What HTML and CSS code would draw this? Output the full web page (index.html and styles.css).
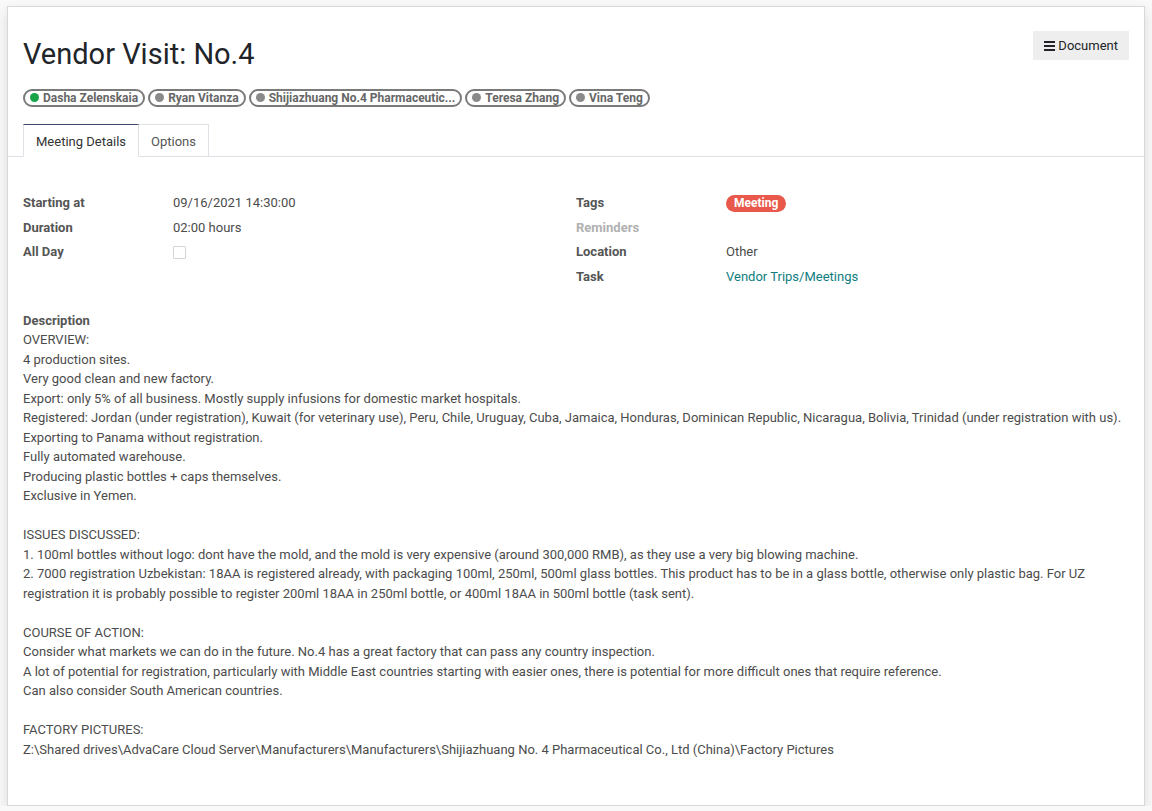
FILE: index.html
```html
<!DOCTYPE html>
<html lang="en">
<head>
    <meta charset="UTF-8">
    <title>Vendor Visit: No.4</title>
    <link rel="stylesheet" href="styles.css">
</head>
<body>
    <div class="sheet">
        <div class="sheet-head">
            <div class="title-row">
                <h1 class="title">Vendor Visit: No.4</h1>
                <button class="doc-btn">
                    <svg class="bars" width="11" height="10" viewBox="0 0 11 10"><rect x="0" y="0" width="11" height="2"/><rect x="0" y="4" width="11" height="2"/><rect x="0" y="8" width="11" height="2"/></svg>
                    Document
                </button>
            </div>

            <div class="attendees">
                <span class="att"><i class="dot green"></i>Dasha Zelenskaia</span>
                <span class="att"><i class="dot"></i>Ryan Vitanza</span>
                <span class="att"><i class="dot"></i>Shijiazhuang No.4 Pharmaceutic...</span>
                <span class="att"><i class="dot"></i>Teresa Zhang</span>
                <span class="att"><i class="dot"></i>Vina Teng</span>
            </div>
        </div>

        <div class="tabs">
            <div class="tab active">Meeting Details</div>
            <div class="tab">Options</div>
        </div>

        <div class="tab-body">
            <div class="groups">
                <div class="group">
                    <div class="row"><div class="lbl">Starting at</div><div class="val">09/16/2021 14:30:00</div></div>
                    <div class="row"><div class="lbl">Duration</div><div class="val">02:00 hours</div></div>
                    <div class="row"><div class="lbl">All Day</div><div class="val"><span class="check"></span></div></div>
                </div>
                <div class="group">
                    <div class="row"><div class="lbl">Tags</div><div class="val"><span class="badge">Meeting</span></div></div>
                    <div class="row"><div class="lbl muted">Reminders</div><div class="val"></div></div>
                    <div class="row"><div class="lbl">Location</div><div class="val">Other</div></div>
                    <div class="row"><div class="lbl">Task</div><div class="val"><a class="link" href="#">Vendor Trips/Meetings</a></div></div>
                </div>
            </div>

            <div class="desc">
                <div class="lbl">Description</div>
                <p>OVERVIEW:<br>
                4 production sites.<br>
                Very good clean and new factory.<br>
                Export: only 5% of all business. Mostly supply infusions for domestic market hospitals.<br>
                Registered: Jordan (under registration), Kuwait (for veterinary use), Peru, Chile, Uruguay, Cuba, Jamaica, Honduras, Dominican Republic, Nicaragua, Bolivia, Trinidad (under registration with us).<br>
                Exporting to Panama without registration.<br>
                Fully automated warehouse.<br>
                Producing plastic bottles + caps themselves.<br>
                Exclusive in Yemen.</p>
                <p>ISSUES DISCUSSED:<br>
                1. 100ml bottles without logo: dont have the mold, and the mold is very expensive (around 300,000 RMB), as they use a very big blowing machine.<br>
                2. 7000 registration Uzbekistan: 18AA is registered already, with packaging 100ml, 250ml, 500ml glass bottles. This product has to be in a glass bottle, otherwise only plastic bag. For UZ registration it is probably possible to register 200ml 18AA in 250ml bottle, or 400ml 18AA in 500ml bottle (task sent).</p>
                <p>COURSE OF ACTION:<br>
                Consider what markets we can do in the future. No.4 has a great factory that can pass any country inspection.<br>
                A lot of potential for registration, particularly with Middle East countries starting with easier ones, there is potential for more difficult ones that require reference.<br>
                Can also consider South American countries.</p>
                <p>FACTORY PICTURES:<br>
                Z:\Shared drives\AdvaCare Cloud Server\Manufacturers\Manufacturers\Shijiazhuang No. 4 Pharmaceutical Co., Ltd (China)\Factory Pictures</p>
            </div>
        </div>
    </div>
</body>
</html>
```

FILE: styles.css
```css
* {
    margin: 0;
    padding: 0;
    box-sizing: border-box;
}

body {
    font-family: Roboto, 'Noto Sans', sans-serif;
    font-size: 13px;
    line-height: 1.5;
    color: #4c4c4c;
    background: #f9f9f9;
}

.sheet {
    margin: 6px 7px 0 7px;
    height: 800px;
    background: #fff;
    border: 1px solid #d8d8d8;
    box-shadow: 0 5px 12px rgba(0, 0, 0, 0.12);
}

.sheet-head {
    padding: 16px 15px 0 15px;
}

.title-row {
    display: flex;
    justify-content: space-between;
    align-items: flex-start;
}

.title {
    font-size: 29px;
    font-weight: 400;
    line-height: 1.2;
    color: #212529;
    margin-top: 14px;
}

.doc-btn {
    display: flex;
    align-items: center;
    gap: 3px;
    margin-top: 8px;
    height: 29px;
    padding: 0 11px;
    background: #eeeeee;
    border: none;
    border-radius: 0;
    font-family: inherit;
    font-size: 13px;
    color: #212529;
}

.bars {
    fill: #212529;
}

.attendees {
    display: flex;
    gap: 3px;
    margin-top: 17px;
}

.att {
    display: inline-flex;
    align-items: center;
    height: 18px;
    padding: 0 5px 0 5px;
    border: 2px solid #7a7a7a;
    border-radius: 9px;
    font-size: 12px;
    font-weight: 700;
    color: #666;
    line-height: 1;
}

.dot {
    display: inline-block;
    width: 9px;
    height: 9px;
    border-radius: 50%;
    background: #8a8a8a;
    margin-right: 4px;
}

.dot.green {
    background: #18a349;
}

.tabs {
    display: flex;
    margin-top: 17px;
    padding-left: 15px;
    border-bottom: 1px solid #dee2e6;
}

.tab {
    height: 33px;
    margin-bottom: -1px;
    padding: 7px 12px 0 12px;
    border: 1px solid #dee2e6;
    border-left: none;
    color: #555;
    background: #fff;
}

.tab.active {
    border-left: 1px solid #dee2e6;
    border-top: 1px solid #3e4a6e;
    border-bottom-color: #fff;
    color: #333;
}

.tab-body {
    padding: 34px 15px 0 15px;
}

.groups {
    display: grid;
    grid-template-columns: 1fr 1fr;
}

.row {
    display: flex;
    min-height: 24.5px;
    padding: 2.5px 0;
}

.lbl {
    width: 150px;
    flex-shrink: 0;
    font-weight: 700;
    color: #555;
}

.lbl.muted {
    color: #b1b1b1;
}

.val {
    flex: 1;
}

.check {
    display: inline-block;
    width: 13px;
    height: 13px;
    margin-top: 4px;
    border: 1px solid #d4d4d4;
    border-radius: 1px;
}

.badge {
    display: inline-block;
    padding: 0 8px;
    line-height: 17px;
    border-radius: 9px;
    background: #e8594b;
    color: #fff;
    font-size: 12px;
    font-weight: 700;
}

.link {
    color: #0f7d80;
    text-decoration: none;
}

.desc {
    margin-top: 22px;
}

.desc .lbl {
    width: auto;
}

.desc p {
    margin-bottom: 19.5px;
}
```
